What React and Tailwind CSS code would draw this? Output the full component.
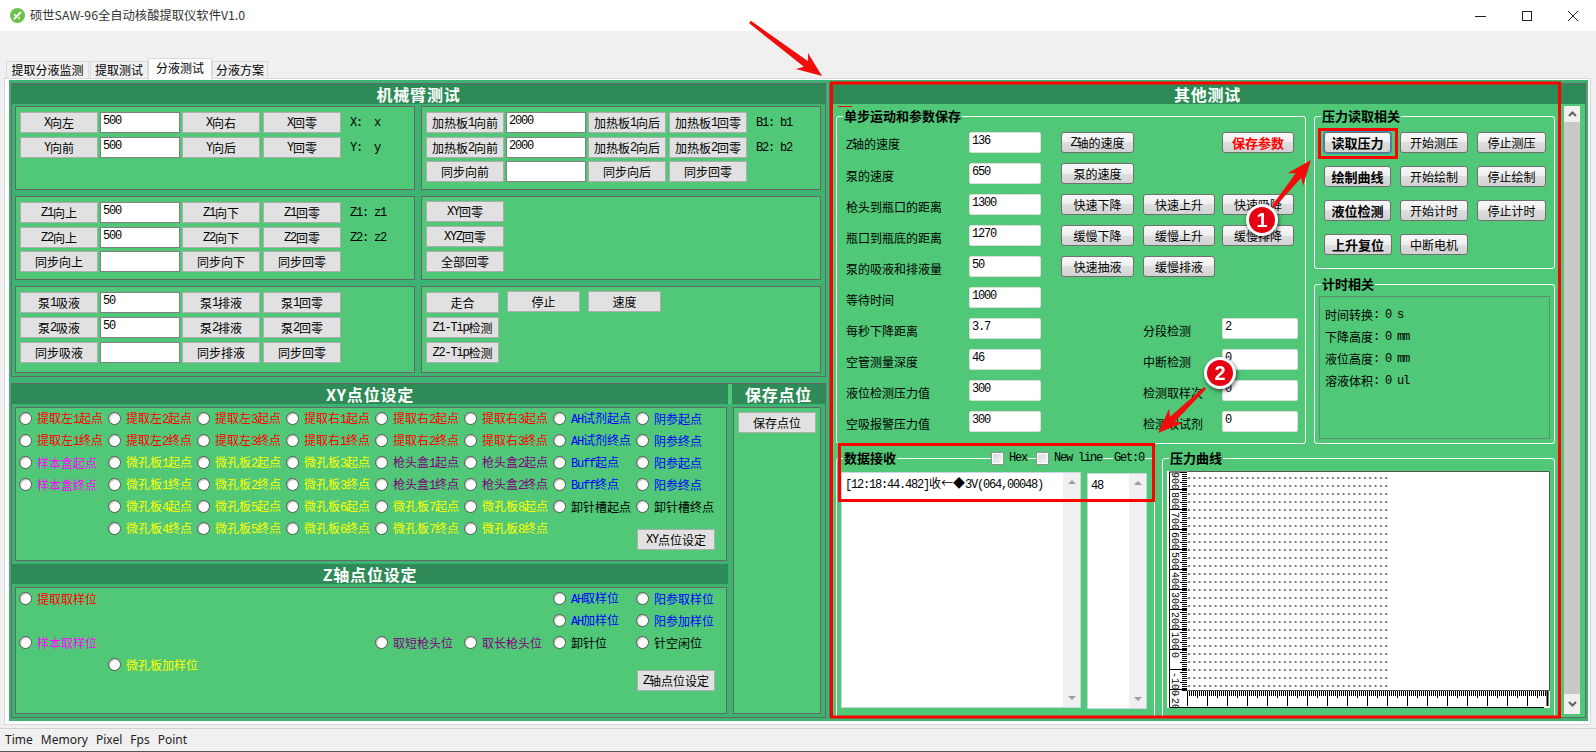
const R = "text-[#ff0000]";
const M = "text-[#ff00ff]";
const Y = "text-[#ffff00]";
const P = "text-[#800080]";
const B = "text-[#0000ff]";
const K = "text-black";

const xyRows = [
  [["提取左1起点", R], ["提取左2起点", R], ["提取左3起点", R], ["提取右1起点", R], ["提取右2起点", R], ["提取右3起点", R], ["AH试剂起点", B], ["阴参起点", B]],
  [["提取左1终点", R], ["提取左2终点", R], ["提取左3终点", R], ["提取右1终点", R], ["提取右2终点", R], ["提取右3终点", R], ["AH试剂终点", B], ["阴参终点", B]],
  [["样本盒起点", M], ["微孔板1起点", Y], ["微孔板2起点", Y], ["微孔板3起点", Y], ["枪头盒1起点", P], ["枪头盒2起点", P], ["Buff起点", B], ["阳参起点", B]],
  [["样本盒终点", M], ["微孔板1终点", Y], ["微孔板2终点", Y], ["微孔板3终点", Y], ["枪头盒1终点", P], ["枪头盒2终点", P], ["Buff终点", B], ["阳参终点", B]],
  [null, ["微孔板4起点", Y], ["微孔板5起点", Y], ["微孔板6起点", Y], ["微孔板7起点", Y], ["微孔板8起点", Y], ["卸针槽起点", K], ["卸针槽终点", K]],
  [null, ["微孔板4终点", Y], ["微孔板5终点", Y], ["微孔板6终点", Y], ["微孔板7终点", Y], ["微孔板8终点", Y], null, "XY点位设定"],
];

const zRows = [
  [["提取取样位", R], null, null, null, null, null, ["AH取样位", B], ["阳参取样位", B]],
  [null, null, null, null, null, null, ["AH加样位", B], ["阳参加样位", B]],
  [["样本取样位", M], null, null, null, ["取短枪头位", P], ["取长枪头位", P], ["卸针位", K], ["针空闲位", K]],
  [null, ["微孔板加样位", Y], null, null, null, null, null, "Z轴点位设定"],
];

const stepRows = [
  ["Z轴的速度", "136", "Z轴的速度", null, "保存参数"],
  ["泵的速度", "650", "泵的速度"],
  ["枪头到瓶口的距离", "1300", "快速下降", "快速上升", "快速吸降"],
  ["瓶口到瓶底的距离", "1270", "缓慢下降", "缓慢上升", "缓慢排降"],
  ["泵的吸液和排液量", "50", "快速抽液", "缓慢排液"],
  ["等待时间", "1000"],
  ["每秒下降距离", "3.7", null, "分段检测", "2"],
  ["空管测量深度", "46", null, "中断检测", "0"],
  ["液位检测压力值", "300", null, "检测取样次", "0"],
  ["空吸报警压力值", "300", null, "检测取试剂", "0"],
];

const pressureRows = [
  ["读取压力", "开始测压", "停止测压"],
  ["绘制曲线", "开始绘制", "停止绘制"],
  ["液位检测", "开始计时", "停止计时"],
  ["上升复位", "中断电机"],
];

// SimSun's half width latin: 6px per char
function T({ s }) {
  return s.split(/([\x20-\x7e]+)/).map((part, i) =>
    /^[\x20-\x7e]/.test(part) ? (
      <span key={i} className="whitespace-pre font-['Liberation_Mono'] text-[12px] tracking-[-1.2px]">
        {part}
      </span>
    ) : (
      part
    )
  );
}

function Btn({ s, w = "w-[78px]", mt = "" }) {
  return (
    <div className={`${w} ${mt} flex h-[21px] shrink-0 items-center justify-center border border-[#adadad] bg-[#e1e1e1] pt-px text-[12px] text-black`}>
      <T s={s} />
    </div>
  );
}

function RoundBtn({ s, w, bold, red }) {
  return (
    <div
      className={`${w} flex h-[21px] shrink-0 items-center justify-center rounded-[3px] border border-[#707070] bg-[linear-gradient(#f8f8f8_0%,#eeeeee_50%,#dfdfdf_50%,#d2d2d2_100%)] pt-px text-[12px] ${bold ? "font-bold text-[13px]" : ""} ${red ? "text-[#ff0000]" : "text-black"}`}
    >
      <T s={s} />
    </div>
  );
}

function Input({ value = "", w = "w-[80px]", soft }) {
  return (
    <input
      readOnly
      value={value}
      className={`${w} block h-[21px] shrink-0 bg-white pb-[3px] pl-[2px] font-['Liberation_Mono'] text-[12px] tracking-[-1.2px] text-black outline-none ${soft ? "rounded-[2px] border border-[#dddddd]" : "border border-[#808080]"}`}
    />
  );
}

function Header({ children, className = "" }) {
  return (
    <div className={`flex h-[20px] shrink-0 items-center justify-center bg-[#2e8b57] text-[16px] font-bold tracking-[0.8px] text-white ${className}`}>
      {children}
    </div>
  );
}

function Box({ className = "", children }) {
  return <div className={`border border-[#666666] bg-[#50c878] ${className}`}>{children}</div>;
}

function ControlRow({ a, c, d, top = "mt-[4px]", value, note }) {
  return (
    <div className={`flex ${top}`}>
      <Btn s={a} />
      <div className="ml-[2px]">
        <Input value={value} />
      </div>
      <div className="ml-[2px]">
        <Btn s={c} />
      </div>
      <div className="ml-[3px]">
        <Btn s={d} />
      </div>
      {note && (
        <span className="ml-[9px] mt-[2px] whitespace-pre font-['Liberation_Mono'] text-[12px] tracking-[-1.2px] text-black">
          {note}
        </span>
      )}
    </div>
  );
}

function Radio({ label, color }) {
  return (
    <div className="flex h-[22px] items-center">
      <span className="h-[13px] w-[13px] shrink-0 rounded-full border border-[#555555] bg-white shadow-[inset_1px_1px_1px_rgba(0,0,0,0.25)]" />
      <span className={`ml-[5px] whitespace-nowrap pt-[2px] text-[12px] ${color}`}>
        <T s={label} />
      </span>
    </div>
  );
}

function PointGrid({ rows, btnTop }) {
  return (
    <div className="-mt-px grid grid-cols-[89px_89px_89px_89px_89px_89px_83px_89px] pl-[3px]">
      {rows.map((row, r) =>
        row.map((cell, i) => {
          if (!cell) return <div key={`${r}-${i}`} className="h-[22px]" />;
          if (typeof cell === "string") {
            return (
              <div key={cell} className="h-[22px]">
                <Btn s={cell} mt={`${btnTop} ml-px`} />
              </div>
            );
          }
          return <Radio key={cell[0]} label={cell[0]} color={cell[1]} />;
        })
      )}
    </div>
  );
}

function Group({ title, className = "", legend, children }) {
  return (
    <div className={`relative shrink-0 rounded-[3px] border border-white ${className}`}>
      <div className="absolute left-[6px] top-[-9px] flex h-[16px] items-center">
        <span className="bg-[#50c878] px-px text-[13px] font-bold text-black">{title}</span>
        {legend}
      </div>
      {children}
    </div>
  );
}

function Check({ className = "" }) {
  return (
    <span className={`h-[13px] w-[13px] shrink-0 border border-[#8e8f8f] bg-[linear-gradient(135deg,#d5d8dd,#f4f5f6)] shadow-[inset_0_0_0_1px_#ffffff] ${className}`} />
  );
}

function ScrollBox({ w, children }) {
  return (
    <div className={`${w} flex h-[236px] shrink-0 border border-[#c5d5e5] bg-white`}>
      <div className="flex-1 pl-[3px] pt-[1px] text-[12px] text-black">{children}</div>
      <div className="flex w-[17px] flex-col items-center justify-between bg-[#f0f0f0] py-[7px]">
        <span className="h-0 w-0 border-x-[4px] border-b-[4px] border-x-transparent border-b-[#a0a0a0]" />
        <span className="h-0 w-0 border-x-[4px] border-t-[4px] border-x-transparent border-t-[#a0a0a0]" />
      </div>
    </div>
  );
}

function Chart() {
  const leftTicks = Array.from({ length: 110 }, (_, i) => i * 2 + 1);
  const bottomTicks = Array.from({ length: 181 }, (_, i) => 20 + i * 2);
  const labels = ["900", "800", "700", "600", "500", "400", "300", "200", "100", "0", "-100", "-200"];
  return (
    <svg width="383" height="237" className="block bg-white">
      <defs>
        <pattern id="dots" x="21" y="6" width="5.33" height="8" patternUnits="userSpaceOnUse">
          <rect width="2" height="2" fill="#7a7a7a" />
        </pattern>
      </defs>
      <rect x="21" y="6" width="202" height="210" fill="url(#dots)" />
      <path d="M20.5 0.5H382.5V219.5H20.5" fill="none" stroke="#555555" />
      <path d="M2.5 1V236.5H377" fill="none" stroke="#000000" />
      <path d="M2 1H20" stroke="#000000" />
      <path d="M380.5 220V235" stroke="#000000" strokeWidth="2" />
      {leftTicks.map((y) => (
        <path key={y} d={`M${y % 10 === 1 ? 13 : 15} ${y + 0.5}H20`} stroke="#000000" />
      ))}
      {labels.map((label, i) => (
        <g key={label}>
          <path d={`M3 ${i * 20 + 18.5}H20`} stroke="#000000" />
          <text transform={`translate(5 ${i * 20 + 1}) rotate(90)`} fontFamily="Liberation Mono" fontSize="10" fill="#000000">
            {label}
          </text>
        </g>
      ))}
      {bottomTicks.map((x, i) => (
        <path key={x} d={`M${x + 0.5} 220V${i % 10 === 0 ? 235 : i % 5 === 0 ? 227 : 225}`} stroke="#000000" />
      ))}
    </svg>
  );
}

function arrow(x1, y1, x2, y2) {
  const len = Math.hypot(x2 - x1, y2 - y1);
  const ux = (x2 - x1) / len;
  const uy = (y2 - y1) / len;
  const nx = -uy;
  const ny = ux;
  const at = (back, side) => `${x2 - ux * back + nx * side},${y2 - uy * back + ny * side}`;
  return [
    `${x1 + nx * 1.5},${y1 + ny * 1.5}`,
    at(20, 3.5),
    at(25, 10),
    at(0, 0),
    at(25, -10),
    at(20, -3.5),
    `${x1 - nx * 1.5},${y1 - ny * 1.5}`,
  ].join(" ");
}

function Annotations() {
  return (
    <svg width="1596" height="752" className="pointer-events-none absolute left-0 top-0">
      <rect x="831.5" y="83" width="728" height="634" fill="none" stroke="#ff0000" strokeWidth="3" />
      <rect x="839.5" y="444.5" width="314" height="56" fill="none" stroke="#ff0000" strokeWidth="3" />
      <rect x="1319.5" y="129.5" width="77" height="28" fill="none" stroke="#ff0000" strokeWidth="3" />
      <path d="M838 106.5H852" stroke="#ff0000" />
      <polygon points={arrow(750, 22, 822, 76)} fill="#f20d0d" />
      <polygon points={arrow(1273, 207, 1311, 160)} fill="#f20d0d" />
      <polygon points={arrow(1205, 388, 1158, 433)} fill="#f20d0d" />
      {[
        [1262, 220, "1"],
        [1220, 373, "2"],
      ].map(([x, y, n]) => (
        <g key={n} className="drop-shadow-[1px_2px_2px_rgba(0,0,0,0.6)]">
          <circle cx={x} cy={y} r="14.5" fill="#e60012" stroke="#ffffff" strokeWidth="3" />
          <text x={x} y={y + 7} textAnchor="middle" fontFamily="Liberation Sans" fontWeight="bold" fontSize="20" fill="#ffffff">
            {n}
          </text>
        </g>
      ))}
    </svg>
  );
}

function ArmPanel() {
  return (
    <div className="h-[294px] border border-[#666666] bg-[#3cb371]">
      <Header>机械臂测试</Header>
      <div className="grid grid-cols-[400px_400px] gap-x-[6px] pl-[3px] pt-[2px]">
        <Box className="h-[84px] pl-[4px] pt-[5px]">
          <ControlRow a="X向左" value="500" c="X向右" d="X回零" top="" note="X:  x" />
          <ControlRow a="Y向前" value="500" c="Y向后" d="Y回零" note="Y:  y" />
        </Box>
        <Box className="h-[84px] pl-[4px] pt-[5px]">
          <ControlRow a="加热板1向前" value="2000" c="加热板1向后" d="加热板1回零" top="" note="B1: b1" />
          <ControlRow a="加热板2向前" value="2000" c="加热板2向后" d="加热板2回零" note="B2: b2" />
          <ControlRow a="同步向前" c="同步向后" d="同步回零" top="mt-[3px]" />
        </Box>
        <Box className="mt-[6px] h-[84px] pl-[4px] pt-[5px]">
          <ControlRow a="Z1向上" value="500" c="Z1向下" d="Z1回零" top="" note="Z1: z1" />
          <ControlRow a="Z2向上" value="500" c="Z2向下" d="Z2回零" note="Z2: z2" />
          <ControlRow a="同步向上" c="同步向下" d="同步回零" top="mt-[3px]" />
        </Box>
        <Box className="mt-[6px] h-[84px] pl-[4px] pt-[4px]">
          <Btn s="XY回零" />
          <Btn s="XYZ回零" mt="mt-[4px]" />
          <Btn s="全部回零" mt="mt-[4px]" />
        </Box>
        <Box className="mt-[6px] h-[87px] pl-[4px] pt-[5px]">
          <ControlRow a="泵1吸液" value="50" c="泵1排液" d="泵1回零" top="" />
          <ControlRow a="泵2吸液" value="50" c="泵2排液" d="泵2回零" />
          <ControlRow a="同步吸液" c="同步排液" d="同步回零" />
        </Box>
        <Box className="mt-[6px] h-[87px] pl-[4px] pt-[5px]">
          <div className="flex items-start">
            <Btn s="走合" w="w-[73px]" />
            <Btn s="停止" w="ml-[8px] -mt-px w-[73px]" />
            <Btn s="速度" w="ml-[8px] -mt-px w-[73px]" />
          </div>
          <Btn s="Z1-Tip检测" w="w-[73px]" mt="mt-[4px]" />
          <Btn s="Z2-Tip检测" w="w-[73px]" mt="mt-[4px]" />
        </Box>
      </div>
    </div>
  );
}

function PointsPanel() {
  return (
    <div className="mt-[6px] flex h-[335px] border border-[#666666] bg-[#3cb371]">
      <div className="w-[716px] shrink-0">
        <Header>XY点位设定</Header>
        <Box className="ml-[3px] mt-[3px] h-[154px] w-[712px]">
          <PointGrid rows={xyRows} btnTop="mt-[12px]" />
        </Box>
        <Header className="mt-[3px]">Z轴点位设定</Header>
        <Box className="ml-[3px] mt-[3px] h-[127px] w-[712px]">
          <PointGrid rows={zRows} btnTop="mt-[17px]" />
        </Box>
      </div>
      <div className="flex-1">
        <div className="border-l-[4px] border-[#50c878]">
          <Header className="tracking-[0.6px]">保存点位</Header>
        </div>
        <Box className="ml-[5px] mt-[3px] h-[307px] w-[88px] pl-[4px] pt-[4px]">
          <Btn s="保存点位" />
        </Box>
      </div>
    </div>
  );
}

function StepGroup() {
  return (
    <Group title="单步运动和参数保存" className="h-[328px] w-[470px] pl-[9px] pt-[10px]">
      <div className="grid auto-rows-[31px] grid-cols-[123px_92px_82px_79px_76px] items-center text-[12px] text-black">
        {stepRows.map(([label, value, b1, b2, b3], i) => (
          <div key={label} className="contents">
            <span className="whitespace-nowrap pt-[4px]">
              <T s={label} />
            </span>
            <Input value={value} w="w-[72px]" soft />
            {b1 ? <RoundBtn s={b1} w="w-[73px]" /> : <span />}
            {!b2 ? <span /> : i >= 6 ? <span className="whitespace-nowrap pt-[4px]">{b2}</span> : <RoundBtn s={b2} w="w-[72px]" />}
            {!b3 ? (
              <span />
            ) : i >= 6 ? (
              <Input value={b3} w="w-[76px]" soft />
            ) : (
              <RoundBtn s={b3} w="w-[72px]" bold={i === 0} red={i === 0} />
            )}
          </div>
        ))}
      </div>
    </Group>
  );
}

function PressureGroup() {
  return (
    <Group title="压力读取相关" className="h-[153px] w-[241px] pl-[9px] pt-[15px]">
      <div className="grid auto-rows-[34px] grid-cols-[76px_77px_69px]">
        {pressureRows.map((row) =>
          row.map((s, i) => (
            <div key={s}>
              {i === 0 ? (
                <div className={s === "读取压力" ? "w-[67px] rounded-[3px] ring-1 ring-[#2f8fc4]" : ""}>
                  <RoundBtn s={s} w={s === "上升复位" ? "w-[68px]" : "w-[67px]"} bold />
                </div>
              ) : (
                <RoundBtn s={s} w={i === 1 ? "w-[68px]" : "w-[69px]"} />
              )}
            </div>
          ))
        )}
      </div>
    </Group>
  );
}

function TimerGroup() {
  return (
    <Group title="计时相关" className="mt-[15px] h-[160px] w-[241px] pl-[4px] pt-[11px]">
      <div className="h-[143px] w-[231px] border border-[#5b8f70] pl-[5px] pt-[7px] text-[12px] text-black">
        {["时间转换: 0 s", "下降高度: 0 mm", "液位高度: 0 mm", "溶液体积: 0 ul"].map((line) => (
          <div key={line} className="flex h-[22px] items-center whitespace-pre">
            <T s={line} />
          </div>
        ))}
      </div>
    </Group>
  );
}

function DataGroup() {
  const legend = (
    <div className="ml-[94px] flex items-center font-['Liberation_Mono'] text-[12px] tracking-[-1.2px] text-black">
      <Check />
      <span className="bg-[#50c878] pl-[5px] pr-px">Hex</span>
      <Check className="ml-[8px]" />
      <span className="whitespace-pre bg-[#50c878] pl-[5px] pr-px">New line</span>
      <span className="ml-[10px] bg-[#50c878] px-px">Get:0</span>
    </div>
  );
  return (
    <Group title="数据接收" legend={legend} className="h-[270px] w-[319px] pl-[4px] pt-[13px]">
      <div className="flex items-start">
        <ScrollBox w="w-[240px]">
          <span className="whitespace-nowrap">
            <T s="[12:18:44.482]" />收←◆<T s="3V(064,00048)" />
          </span>
        </ScrollBox>
        <div className="ml-[6px] mt-px">
          <ScrollBox w="w-[60px]">
            <T s="48" />
          </ScrollBox>
        </div>
      </div>
    </Group>
  );
}

function OtherPanel() {
  return (
    <div className="ml-[3px] flex h-[635px] w-[757px] flex-col overflow-hidden border border-[#666666] bg-[#50c878]">
      <Header>其他测试</Header>
      <div className="flex">
        <div className="w-[734px] shrink-0 pl-[6px] pt-[12px]">
          <div className="flex">
            <StepGroup />
            <div className="ml-[8px]">
              <PressureGroup />
              <TimerGroup />
            </div>
          </div>
          <div className="mt-[14px] flex">
            <DataGroup />
            <Group title="压力曲线" className="ml-[7px] h-[270px] w-[393px] pl-[4px] pt-[12px]">
              <Chart />
            </Group>
          </div>
        </div>
        <div className="mt-[2px] flex h-[608px] w-[16px] flex-col bg-[#c8c8c8]">
          <div className="flex h-[16px] items-center justify-center bg-[#f0f0f0]">
            <svg width="9" height="6">
              <path d="M1 5L4.5 1.5L8 5" fill="none" stroke="#606060" strokeWidth="2" />
            </svg>
          </div>
          <div className="flex-1" />
          <div className="flex h-[20px] items-center justify-center bg-[#f0f0f0]">
            <svg width="9" height="6">
              <path d="M1 1L4.5 4.5L8 1" fill="none" stroke="#606060" strokeWidth="2" />
            </svg>
          </div>
        </div>
      </div>
    </div>
  );
}

const tabs = [
  ["提取分液监测", "w-[83px]"],
  ["提取测试", "ml-px w-[58px]"],
  ["分液测试", "w-[64px]"],
  ["分液方案", "w-[56px]"],
];

export default function App() {
  return (
    <div className="relative flex h-[752px] w-[1596px] flex-col overflow-hidden border-b border-[#555555] bg-[#f0f0f0] font-['Noto_Sans_CJK_SC','Noto_Sans',sans-serif] text-black">
      <div className="flex h-[31px] shrink-0 items-center bg-white pl-[10px]">
        <svg width="15" height="15" viewBox="0 0 15 15">
          <circle cx="7.5" cy="7.5" r="7.5" fill="#6cc24a" />
          <path d="M4 11L11 4" stroke="#ffffff" strokeWidth="2" />
          <circle cx="5" cy="7" r="1" fill="#ffffff" />
          <circle cx="9" cy="10" r="1" fill="#ffffff" />
        </svg>
        <span className="ml-[5px] text-[12.3px] text-[#333333]">硕世SAW-96全自动核酸提取仪软件V1.0</span>
        <div className="ml-auto flex h-full">
          <div className="flex w-[46px] items-center justify-center">
            <svg width="12" height="12">
              <path d="M0 6.5H11" stroke="#222222" />
            </svg>
          </div>
          <div className="flex w-[46px] items-center justify-center">
            <svg width="12" height="12">
              <rect x="1.5" y="1.5" width="9" height="9" fill="none" stroke="#222222" />
            </svg>
          </div>
          <div className="flex w-[46px] items-center justify-center">
            <svg width="12" height="12">
              <path d="M1 1L11 11M11 1L1 11" stroke="#222222" />
            </svg>
          </div>
        </div>
      </div>

      <div className="flex h-[47px] shrink-0 items-end pl-[6px]">
        {tabs.map(([name, w], i) =>
          i === 2 ? (
            <div key={name} className={`${w} z-10 -mb-[2px] flex h-[22px] items-center justify-center border border-b-0 border-[#d9d9d9] bg-white pb-[3px] text-[12px]`}>
              {name}
            </div>
          ) : (
            <div key={name} className={`${w} flex h-[17px] items-center justify-center border border-b-0 border-[#d9d9d9] bg-[#f0f0f0] text-[12px]`}>
              {name}
            </div>
          )
        )}
      </div>

      <div className="ml-[4px] mr-[5px] h-[647px] shrink-0 border border-[#d9d9d9] bg-white pb-[3px] pl-[4px] pr-[2px] pt-px">
        <div className="flex h-[641px] bg-[#3cb371] pl-[2px] pt-[3px]">
          <div className="w-[815px] shrink-0">
            <ArmPanel />
            <PointsPanel />
          </div>
          <OtherPanel />
        </div>
      </div>

      <div className="mt-[3px] flex flex-1 items-center gap-[8px] border-t border-[#d0d0d0] pl-[5px] font-['Noto_Sans'] text-[12px] text-[#222222]">
        <span>Time</span>
        <span>Memory</span>
        <span>Pixel</span>
        <span>Fps</span>
        <span>Point</span>
      </div>

      <Annotations />
    </div>
  );
}
